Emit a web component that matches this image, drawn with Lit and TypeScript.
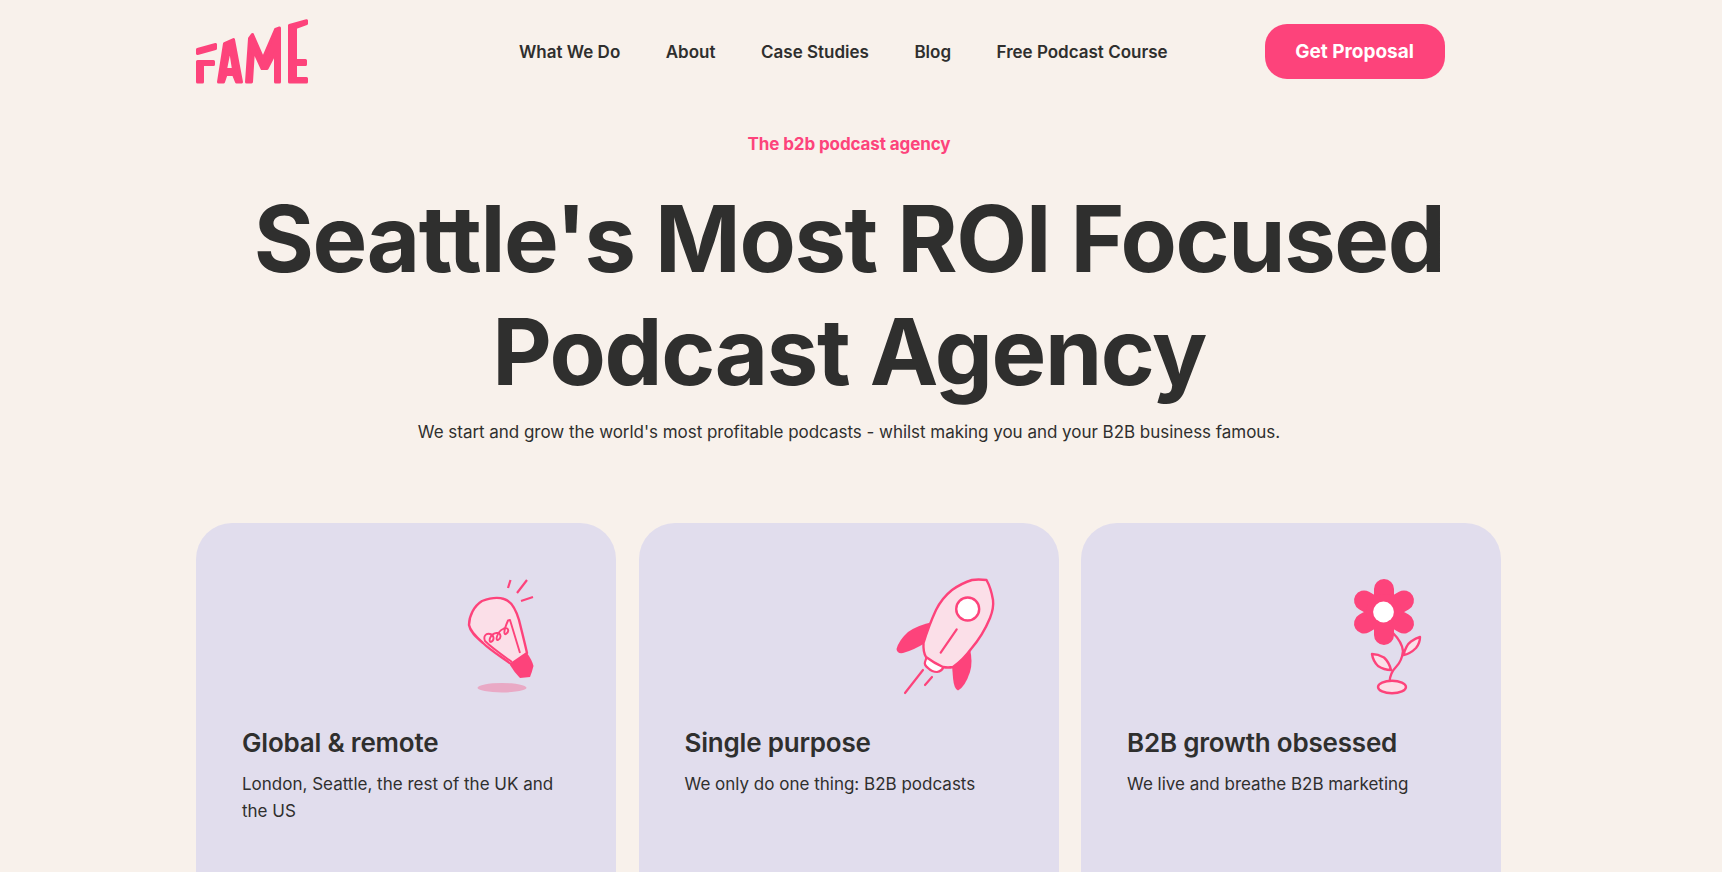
import { LitElement, html, css, svg } from "lit";
import { customElement } from "lit/decorators.js";

const P = "#fd437b";
const L = "#fbdfe8";

const logo = svg`<svg class="logo" viewBox="0 0 113 66" aria-label="Fame">
  <g fill="${P}" stroke="${P}" stroke-width="3" stroke-linejoin="round">
    <path d="M1.5 30.5 L19.5 25.5 L19.5 29.5 L1.5 34.5Z"/>
    <path d="M1.5 42.5 L17.5 42.5 L17.5 45.5 L6.5 45.5 L6.5 63 L1.5 63Z"/>
    <path fill-rule="evenodd" d="M22.5 63 L28.5 24.5 L37.5 20.5 L45.5 63 L40.5 63 L37.5 55.5 L30 55.5 L27.5 63Z M29.5 50.5 L37.5 50.5 L34 28Z"/>
    <path d="M50.5 63 L53.5 19.5 L56.5 15.5 L67 39.5 L79.5 10.5 L83.5 9 L83.5 63 L79.5 63 L79.5 33 L71 49.5 L66 49.5 L57.5 31 L55.5 63Z"/>
    <path d="M93.5 6.5 L110.5 1.7 L110.5 4.5 L99.5 8.5 L99.5 41.5 L109.5 41.5 L109.5 45.5 L99.5 45.5 L99.5 59.5 L110.5 59.5 L110.5 63 L93.5 63Z"/>
  </g>
</svg>`;

const bulb = svg`<svg class="ico" width="110" height="140" viewBox="0 0 110 140">
  <ellipse cx="62" cy="127.7" rx="24.5" ry="4.7" fill="#e9a9c5"/>
  <path d="M42 41 C50 38 58 37 64 39 C72 41 76 50 79 60 C82 72 85 84 87 93 L71 104 C60 96 50 90 43 83 C35 76 30 71 29 65 C29 56 34 46 42 41Z" fill="${L}" stroke="${P}" stroke-width="2.4" stroke-linejoin="round"/>
  <path d="M72 102 C62 95 52 88 45 81 C43 76 46 73 50 74 C54 75 55 80 51 82 C48 82 50 74 56 73 C61 72 62 78 58 80 C55 81 57 72 63 69 C68 66 70 71 66 74 C64 75 63 72 68 60.5 L70 60 L80 93" fill="none" stroke="${P}" stroke-width="1.9" stroke-linejoin="round"/>
  <path d="M70 105 L87 93 Q92 100 93.5 106 Q92 112 90 117 L80 118 Q74 112 70 105Z" fill="${P}"/>
  <path d="M68 28 L70.5 20 M77 33 L87 20 M81 41 L93 37" stroke="${P}" stroke-width="2.2" fill="none"/>
</svg>`;

const rocket = svg`<svg class="ico" width="130" height="140" viewBox="0 0 130 140">
  <path d="M53 57 Q38 60 28 67 Q19 75 16.5 84 Q17 89 23 88 Q34 85 45 78Z" fill="${P}"/>
  <path d="M90 84 Q93 97 90 107 Q85 122 78 125.5 Q74 124 73 113 L72 100Z" fill="${P}"/>
  <path d="M47 91 L63.5 102 Q62 106 57 107 Q52 107 48 103 Q44 100 45 97Z" fill="#fff" stroke="${P}" stroke-width="2.2" stroke-linejoin="round"/>
  <path d="M106.5 15 Q98 14 92 15 Q82 18 72 25 Q62 33 56 45 Q49 60 43.5 78 Q43 87 46 92 Q54 98 63 102 Q68 103 73 102 Q83 95 91 84 Q103 70 110 53 Q114 43 113 35 Q111 23 106.5 15Z" fill="${L}" stroke="${P}" stroke-width="2.4" stroke-linejoin="round"/>
  <circle cx="87.7" cy="44" r="11.5" fill="#fff" stroke="${P}" stroke-width="2.4"/>
  <path d="M76.7 64.3 L60.7 87.7 M43 105 L25 128 M52 112 L45 120" stroke="${P}" stroke-width="2.2" stroke-linecap="round" fill="none"/>
</svg>`;

const flower = svg`<svg class="ico" width="110" height="140" viewBox="0 0 110 140">
  <g stroke="${P}" stroke-width="2.4" fill="${L}" stroke-linejoin="round">
    <path d="M63 68 Q72 77 73 86 Q72 96 66 102 Q60 108 59.5 117" fill="none"/>
    <path d="M73.5 90 Q76 80 81 76.5 Q86 73 90 72 Q90 78 86 83 Q80 89 73.5 90Z"/>
    <path d="M61 105 Q59 97 54 92.5 Q48 89 42 89 Q43 96 48 101 Q54 105 61 105Z"/>
    <ellipse cx="62" cy="122" rx="14" ry="6.3"/>
  </g>
  <g stroke="${P}" stroke-width="20" stroke-linecap="round">
    <path d="M54 47 L54 24 M54 47 L54 70 M54 47 L34 35.5 M54 47 L74 35.5 M54 47 L34 58.5 M54 47 L74 58.5"/>
  </g>
  <circle cx="54" cy="47" r="18" fill="${P}"/>
  <circle cx="53.5" cy="47" r="10.4" fill="#fff"/>
</svg>`;

@customElement("app-root")
export class AppRoot extends LitElement {
  static styles = css`
    :host {
      display: block;
      height: 872px;
      overflow: hidden;
      background: #f8f1eb;
      color: #2f2f2e;
      font-family: "Inter", "Liberation Sans", sans-serif;
    }
    .wrap {
      width: 1306px;
      margin-left: 196px;
    }
    header {
      display: flex;
      align-items: center;
      height: 103px;
    }
    .logo {
      width: 113px;
      height: 66px;
      display: block;
      overflow: visible;
    }
    nav {
      display: flex;
      gap: 45.5px;
      margin-left: 210px;
      font-size: 17px;
      font-weight: 600;
    }
    nav a {
      white-space: nowrap;
    }
    .cta {
      margin-left: 97px;
      width: 180px;
      height: 55px;
      background: #fd437b;
      color: #fff;
      border-radius: 22px;
      display: flex;
      align-items: center;
      justify-content: center;
      font-size: 19px;
      font-weight: 700;
    }
    .hero {
      display: flex;
      flex-direction: column;
      align-items: center;
      text-align: center;
    }
    .eyebrow {
      color: #fd437b;
      font-size: 17px;
      font-weight: 700;
      line-height: 24px;
      margin-top: 29px;
      letter-spacing: -0.1px;
    }
    h1 {
      margin: 26px 0 0;
      font-size: 92px;
      font-weight: 700;
      line-height: 113px;
      letter-spacing: -1.4px;
    }
    .sub {
      margin: 12px 0 0;
      font-size: 17px;
      line-height: 24px;
      letter-spacing: -0.03px;
    }
    .cards {
      display: grid;
      grid-template-columns: repeat(3, 420px);
      gap: 22.5px;
      margin-top: 79px;
    }
    .card {
      background: #e1dded;
      border-radius: 36px;
      height: 400px;
      padding: 0 46px;
    }
    .art {
      height: 204px;
      position: relative;
    }
    .ico {
      position: absolute;
    }
    h3 {
      margin: 0;
      font-size: 26px;
      font-weight: 600;
      line-height: 32px;
      letter-spacing: -0.2px;
    }
    .card p {
      margin: 12px 0 0;
      font-size: 17px;
      line-height: 27px;
    }
    .a1 .ico { left: 198px; top: 37px; }
    .a2 .ico { left: 195px; top: 42px; }
    .a3 .ico { left: 203px; top: 42px; }
  `;

  render() {
    return html`<div class="wrap">
      <header>
        ${logo}
        <nav>
          <a>What We Do</a><a>About</a><a>Case Studies</a><a>Blog</a><a>Free Podcast Course</a>
        </nav>
        <a class="cta">Get Proposal</a>
      </header>
      <section class="hero">
        <div class="eyebrow">The b2b podcast agency</div>
        <h1>Seattle's Most ROI Focused<br />Podcast Agency</h1>
        <p class="sub">We start and grow the world's most profitable podcasts - whilst making you and your B2B business famous.</p>
      </section>
      <section class="cards">
        <div class="card">
          <div class="art a1">${bulb}</div>
          <h3>Global &amp; remote</h3>
          <p>London, Seattle, the rest of the UK and the US</p>
        </div>
        <div class="card">
          <div class="art a2">${rocket}</div>
          <h3>Single purpose</h3>
          <p>We only do one thing: B2B podcasts</p>
        </div>
        <div class="card">
          <div class="art a3">${flower}</div>
          <h3>B2B growth obsessed</h3>
          <p>We live and breathe B2B marketing</p>
        </div>
      </section>
    </div>`;
  }
}
